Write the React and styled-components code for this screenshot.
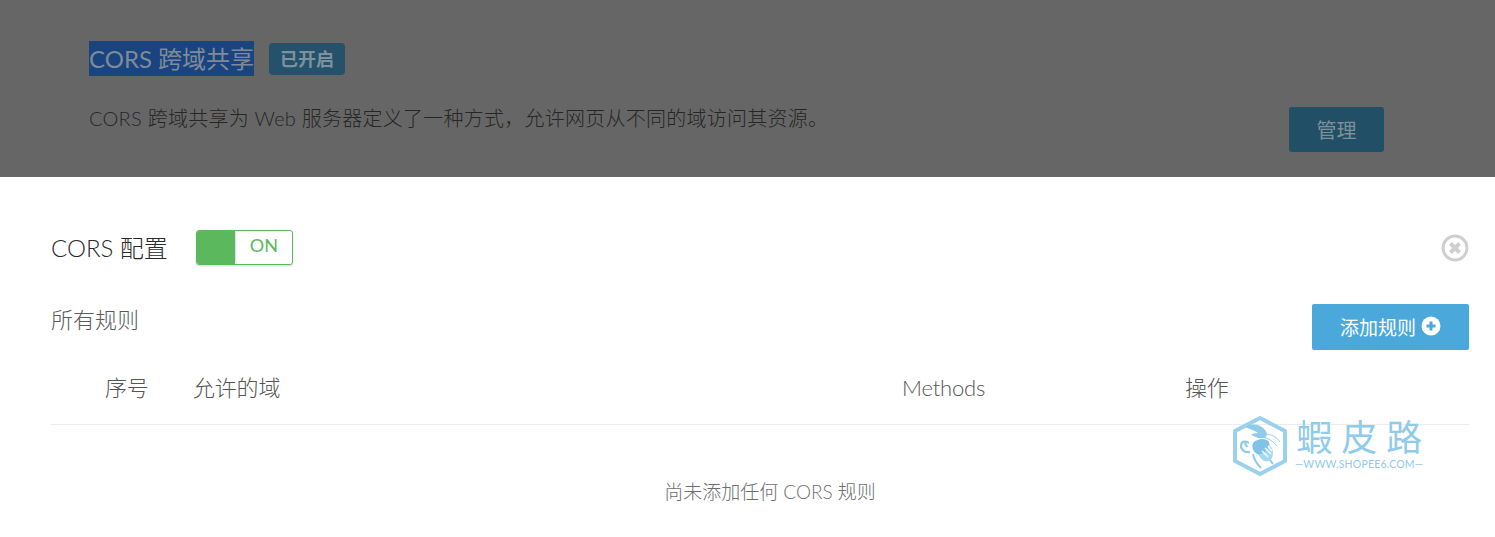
import React from "react";
import styled, { createGlobalStyle } from "styled-components";

const GlobalStyle = createGlobalStyle`
  html, body { margin: 0; padding: 0; background: #fff; }
  body { font-family: Lato, "Noto Sans CJK SC", sans-serif; font-weight: 300; }
`;

const Page = styled.div`
  position: relative;
  width: 1495px;
  height: 537px;
  overflow: hidden;
`;

const Backdrop = styled.section`
  box-sizing: border-box;
  height: 177px;
  background: #666;
  padding: 41px 111px 0 89px;
`;

const TitleRow = styled.div`
  display: flex;
  align-items: center;
  gap: 15px;
`;

const Title = styled.h2`
  margin: 0;
  height: 35px;
  line-height: 35px;
  font-size: 24px;
  font-weight: 400;
  color: #7f8a99;
  background: #1a4480;
  white-space: nowrap;
`;

const Badge = styled.span`
  box-sizing: border-box;
  width: 76px;
  height: 32px;
  border-radius: 4px;
  background: #25516a;
  color: #7d929f;
  font-size: 18px;
  font-weight: 700;
  line-height: 32px;
  text-align: center;
`;

const DescRow = styled.div`
  display: flex;
  justify-content: space-between;
  align-items: flex-start;
  margin-top: 25px;
`;

const Description = styled.p`
  margin: 0;
  font-size: 20px;
  line-height: 34px;
  letter-spacing: 0.25px;
  color: #262626;
  white-space: nowrap;
`;

const ManageButton = styled.button`
  width: 95px;
  height: 45px;
  margin-top: 6px;
  border: 0;
  border-radius: 3px;
  background: #214f66;
  color: #7d8f99;
  font: 400 20px Lato, "Noto Sans CJK SC", sans-serif;
`;

const Panel = styled.section`
  padding: 53px 26px 0 51px;
`;

const PanelHead = styled.div`
  display: flex;
  align-items: center;
  height: 35px;
`;

const PanelTitle = styled.h3`
  margin: -2px 28px 0 0;
  font-size: 24px;
  font-weight: 300;
  color: #2a2a2a;
`;

const Toggle = styled.div`
  box-sizing: border-box;
  display: flex;
  width: 97px;
  height: 35px;
  border: 1px solid #5cb85c;
  border-radius: 3px;
  overflow: hidden;
  box-shadow: 0 1px 2px rgba(0, 0, 0, 0.18);
`;

const ToggleFill = styled.span`
  width: 38px;
  background: #5cb85c;
`;

const ToggleLabel = styled.span`
  flex: 1;
  border-left: 1px solid #d8e8d8;
  border-radius: 3px;
  background: #fff;
  color: #5cb85c;
  font-size: 18px;
  font-weight: 400;
  line-height: 28px;
  text-align: center;
`;

const CloseButton = styled.button`
  display: flex;
  margin-left: auto;
  padding: 0;
  border: 0;
  background: none;
`;

const RulesHead = styled.div`
  display: flex;
  justify-content: space-between;
  align-items: flex-start;
  margin-top: 39px;
`;

const RulesTitle = styled.h4`
  margin: 0;
  padding-top: 1px;
  font-size: 22px;
  line-height: 30px;
  font-weight: 300;
  color: #5a5a5a;
`;

const AddButton = styled.button`
  display: flex;
  align-items: center;
  justify-content: center;
  gap: 5px;
  width: 157px;
  height: 46px;
  padding: 0 0 2px;
  border: 0;
  border-radius: 2px;
  background: #4ba8db;
  color: #fff;
  font: 400 19px Lato, "Noto Sans CJK SC", sans-serif;
`;

const TableHead = styled.div`
  display: grid;
  grid-template-columns: 88px 709px 283px 1fr;
  box-sizing: border-box;
  height: 75px;
  padding: 19px 0 0 54px;
  border-bottom: 1px solid #ececec;
  font-size: 22px;
  line-height: 38px;
  letter-spacing: -0.2px;
  color: #555;
`;

const EmptyNote = styled.p`
  margin: 52px 0 0;
  padding-left: 20px;
  font-size: 19px;
  line-height: 30px;
  color: #6e6e6e;
  text-align: center;
`;

const Watermark = styled.div`
  position: absolute;
  left: 1232px;
  top: 415px;
  display: flex;
  gap: 7px;
`;

const WatermarkText = styled.div`
  display: flex;
  flex-direction: column;
  align-items: center;
  color: #8fcbea;
`;

const WatermarkName = styled.span`
  font-size: 36px;
  font-weight: 400;
  line-height: 44px;
  letter-spacing: 9px;
  margin-right: -9px;
  white-space: nowrap;
`;

const WatermarkUrl = styled.span`
  font-size: 10.5px;
  font-weight: 400;
  line-height: 10px;
  letter-spacing: 0.2px;
  white-space: nowrap;
`;

function CloseIcon() {
  return (
    <svg width="28" height="28" viewBox="0 0 28 28">
      <circle cx="14" cy="14" r="12" fill="none" stroke="#cfcfcf" strokeWidth="3" />
      <path d="M9.5 9.5l9 9M18.5 9.5l-9 9" stroke="#cfcfcf" strokeWidth="4" />
    </svg>
  );
}

function PlusIcon() {
  return (
    <svg width="20" height="20" viewBox="0 0 20 20">
      <circle cx="10" cy="10" r="9.5" fill="#fff" />
      <path d="M10 5.5v9M5.5 10h9" stroke="#4ba8db" strokeWidth="3" />
    </svg>
  );
}

function BeeLogo() {
  return (
    <svg width="56" height="62" viewBox="0 0 56 62" fill="none">
      <path d="M28 3L53 16V46L28 59L3 46V16Z" stroke="#9ad2ee" strokeWidth="4" strokeLinejoin="round" />
      <path d="M13 12c7-4 15-3 20 3 3 3 2 7-1 8-5 1-10-1-13-4l7-1c-4-3-9-4-13-6z" fill="#8fcbea" />
      <path d="M21 28c5-5 13-5 16-1 2 5-3 12-10 13-5-2-8-7-6-12z" fill="#7fc4e8" />
      <path d="M33 19c6 0 12 3 15 8M30 22c6 1 11 4 15 9" stroke="#8fcbea" strokeWidth="1" />
      <path d="M37 30c4 3 5 8 3 13-2 3-5 4-8 3-3-2-5-4-5-6 4 0 9-5 10-10z" fill="#a5d8f0" />
      <path d="M30 36l6 6M33 33l6 6M36 31l4 5" stroke="#fff" strokeWidth="1.4" />
      <path d="M17 28c-4-3-8-1-8 3 0 4 4 7 9 6M13 28l2 4" stroke="#8fcbea" strokeWidth="2.2" />
      <path d="M21 39c1 6 4 10 8 14M38 45l3 4" stroke="#8fcbea" strokeWidth="2" />
    </svg>
  );
}

export default function App() {
  return (
    <Page>
      <GlobalStyle />
      <Backdrop>
        <TitleRow>
          <Title>CORS 跨域共享</Title>
          <Badge>已开启</Badge>
        </TitleRow>
        <DescRow>
          <Description>CORS 跨域共享为 Web 服务器定义了一种方式，允许网页从不同的域访问其资源。</Description>
          <ManageButton>管理</ManageButton>
        </DescRow>
      </Backdrop>
      <Panel>
        <PanelHead>
          <PanelTitle>CORS 配置</PanelTitle>
          <Toggle>
            <ToggleFill />
            <ToggleLabel>ON</ToggleLabel>
          </Toggle>
          <CloseButton aria-label="关闭">
            <CloseIcon />
          </CloseButton>
        </PanelHead>
        <RulesHead>
          <RulesTitle>所有规则</RulesTitle>
          <AddButton>
            添加规则 <PlusIcon />
          </AddButton>
        </RulesHead>
        <TableHead>
          <span>序号</span>
          <span>允许的域</span>
          <span>Methods</span>
          <span>操作</span>
        </TableHead>
        <EmptyNote>尚未添加任何 CORS 规则</EmptyNote>
      </Panel>
      <Watermark>
        <BeeLogo />
        <WatermarkText>
          <WatermarkName>蝦皮路</WatermarkName>
          <WatermarkUrl>—WWW.SHOPEE6.COM—</WatermarkUrl>
        </WatermarkText>
      </Watermark>
    </Page>
  );
}
